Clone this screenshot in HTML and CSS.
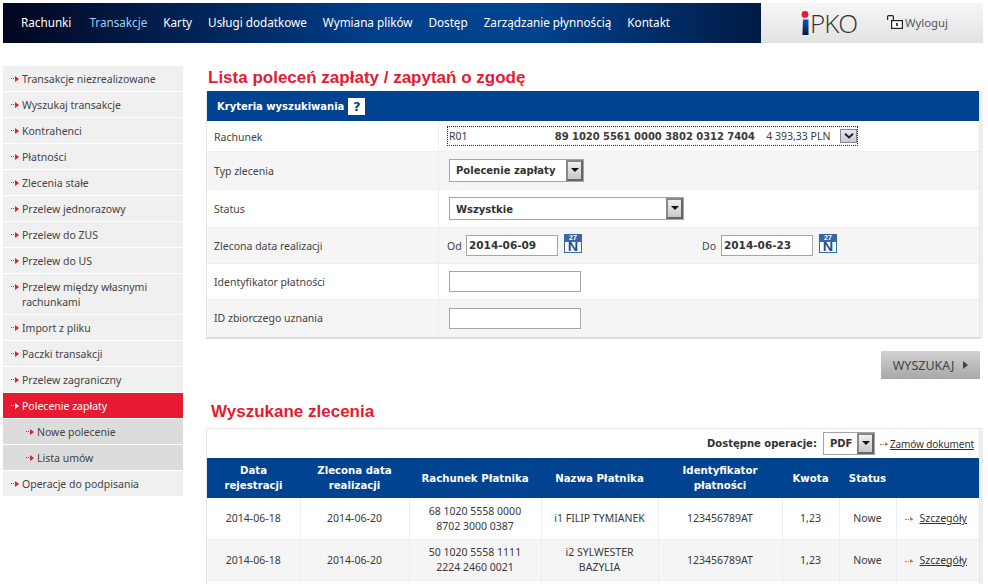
FILE: index.html
```html
<!DOCTYPE html>
<html lang="pl">
<head>
<meta charset="utf-8">
<title>iPKO</title>
<link rel="stylesheet" href="styles.css">
</head>
<body>
<div class="page">
  <header class="topbar">
    <nav class="topnav">
      <a>Rachunki</a><a class="active">Transakcje</a><a>Karty</a><a>Usługi dodatkowe</a><a>Wymiana plików</a><a>Dostęp</a><a>Zarządzanie płynnością</a><a>Kontakt</a>
    </nav>
    <div class="brand">
      <div class="logo">
        <svg class="logo-i" width="8" height="24" viewBox="0 0 8 24"><defs><linearGradient id="lg" x1="0" y1="0" x2="0" y2="1"><stop offset="0" stop-color="#0a58b0"/><stop offset="1" stop-color="#061a3c"/></linearGradient></defs><circle cx="4" cy="3.4" r="3.4" fill="#e8192f"/><path d="M2 8.5h5.5V24H1.4z" fill="url(#lg)"/></svg>
        <span class="logo-text">PKO</span>
      </div>
      <a class="logout">
        <svg width="16" height="14" viewBox="0 0 16 14" fill="none" stroke="#222" stroke-width="1.2"><path d="M.6 5V1.6Q.6.6 1.6.6h3.8q1 0 1 1V5"/><rect x="4.6" y="5.6" width="10.8" height="7.8" fill="#fff"/><path d="M10 8v3" stroke-width="1.6"/></svg>
        <span>Wyloguj</span>
      </a>
    </div>
  </header>

  <div class="layout">
    <aside class="sidebar">
      <a class="side-item">Transakcje niezrealizowane</a>
      <a class="side-item">Wyszukaj transakcje</a>
      <a class="side-item">Kontrahenci</a>
      <a class="side-item">Płatności</a>
      <a class="side-item">Zlecenia stałe</a>
      <a class="side-item">Przelew jednorazowy</a>
      <a class="side-item">Przelew do ZUS</a>
      <a class="side-item">Przelew do US</a>
      <a class="side-item tall">Przelew między własnymi rachunkami</a>
      <a class="side-item">Import z pliku</a>
      <a class="side-item">Paczki transakcji</a>
      <a class="side-item">Przelew zagraniczny</a>
      <a class="side-item current">Polecenie zapłaty</a>
      <a class="side-item sub">Nowe polecenie</a>
      <a class="side-item sub">Lista umów</a>
      <a class="side-item">Operacje do podpisania</a>
    </aside>

    <main class="content">
      <h1 class="title">Lista poleceń zapłaty / zapytań o zgodę</h1>
      <section class="panel criteria">
        <div class="panel-head">Kryteria wyszukiwania <span class="help">?</span></div>
        <div class="frow r1">
          <div class="flabel">Rachunek</div>
          <div class="fvalue">
            <div class="account">
              <span class="acc-name">R01</span>
              <b class="acc-no">89 1020 5561 0000 3802 0312 7404</b>
              <span class="acc-bal">4 393,33 PLN</span>
              <span class="acc-btn"><svg width="10" height="6" viewBox="0 0 10 6"><path d="M1 .8l4 3.6 4-3.6" fill="none" stroke="#222" stroke-width="2"/></svg></span>
            </div>
          </div>
        </div>
        <div class="frow r2 alt">
          <div class="flabel">Typ zlecenia</div>
          <div class="fvalue"><div class="select w-type"><b>Polecenie zapłaty</b><span class="sel-btn"></span></div></div>
        </div>
        <div class="frow r2">
          <div class="flabel">Status</div>
          <div class="fvalue"><div class="select w-status"><b>Wszystkie</b><span class="sel-btn"></span></div></div>
        </div>
        <div class="frow r3 alt">
          <div class="flabel">Zlecona data realizacji</div>
          <div class="fvalue dates">
            <div class="date-group">
              <span class="date-label">Od</span><span class="input date">2014-06-09</span>
              <span class="cal"><span class="cal-top">27</span><span class="cal-n">N</span></span>
            </div>
            <div class="date-group">
              <span class="date-label">Do</span><span class="input date">2014-06-23</span>
              <span class="cal"><span class="cal-top">27</span><span class="cal-n">N</span></span>
            </div>
          </div>
        </div>
        <div class="frow r3">
          <div class="flabel">Identyfikator płatności</div>
          <div class="fvalue"><span class="input text"></span></div>
        </div>
        <div class="frow r3 alt last">
          <div class="flabel">ID zbiorczego uznania</div>
          <div class="fvalue"><span class="input text"></span></div>
        </div>
      </section>
      <div class="actions">
        <a class="btn-search">WYSZUKAJ<svg width="5" height="8" viewBox="0 0 5 8"><path d="M0 0l5 4-5 4z" fill="#444"/></svg></a>
      </div>

      <h2 class="title second">Wyszukane zlecenia</h2>
      <section class="panel results">
        <div class="ops">
          <b>Dostępne operacje:</b>
          <div class="select w-pdf"><b>PDF</b><span class="sel-btn"></span></div>
          <span class="ops-arrow"></span><a class="link ops-link">Zamów dokument</a>
        </div>
        <table class="grid">
          <colgroup><col class="c1"><col class="c2"><col class="c3"><col class="c4"><col class="c5"><col class="c6"><col class="c7"><col class="c8"></colgroup>
          <thead>
            <tr><th>Data<br>rejestracji</th><th>Zlecona data<br>realizacji</th><th>Rachunek Płatnika</th><th>Nazwa Płatnika</th><th>Identyfikator<br>płatności</th><th>Kwota</th><th>Status</th><th></th></tr>
          </thead>
          <tbody>
            <tr><td>2014-06-18</td><td>2014-06-20</td><td>68 1020 5558 0000<br>8702 3000 0387</td><td>i1 FILIP TYMIANEK</td><td>123456789AT</td><td>1,23</td><td>Nowe</td><td class="more"><span class="more-arrow"></span><a class="link">Szczegóły</a></td></tr>
            <tr class="alt"><td>2014-06-18</td><td>2014-06-20</td><td>50 1020 5558 1111<br>2224 2460 0021</td><td>i2 SYLWESTER<br>BAZYLIA</td><td>123456789AT</td><td>1,23</td><td>Nowe</td><td class="more"><span class="more-arrow"></span><a class="link">Szczegóły</a></td></tr>
            <tr><td></td><td></td><td></td><td></td><td></td><td></td><td></td><td></td></tr>
          </tbody>
        </table>
      </section>
    </main>
  </div>
</div>
</body>
</html>
```
FILE: styles.css
```css
* { box-sizing: border-box; }
html, body { margin: 0; height: 100%; overflow: hidden; background: #fff; }
body { font-family: "Noto Sans", "DejaVu Sans", sans-serif; font-size: 10.5px; color: #3a3a3a; }
b { font-family: "DejaVu Sans", sans-serif; font-size: 10px; font-weight: 700; }
.page { width: 988px; height: 584px; padding: 3px 5px 0 3px; overflow: hidden; }

.topbar { display: flex; height: 40px; }
.topnav { width: 758px; display: flex; align-items: center; padding: 0 0 2px 18px; gap: 16px; background: linear-gradient(90deg, #020620 0%, #00408c 50%, #00438f 70%, #011a45 100%); font-size: 11.7px; color: #fff; }
.topnav .active { color: #9fd0f5; margin-left: 2px; }
.brand { flex: 1; display: flex; align-items: center; background: linear-gradient(#f6f6f6, #e2e2e2); padding-left: 40px; }
.logo { display: flex; align-items: flex-end; width: 86px; height: 24px; }
.logo-i { display: block; }
.logo-text { font-family: "Open Sans", sans-serif; font-weight: 300; font-size: 26px; line-height: 24px; color: #333; margin-left: 1px; letter-spacing: -1px; }
.logout { display: flex; align-items: center; gap: 2px; color: #555; font-size: 11.3px; margin-bottom: 2px; }

.layout { display: flex; margin-top: 23px; }
.sidebar { width: 180px; display: flex; flex-direction: column; gap: 1px; }
.side-item { display: flex; align-items: center; min-height: 25px; padding: 1px 0 0 19px; background: #f0f0f0; color: #444; position: relative; line-height: 15px; }
.side-item.tall { min-height: 40px; padding-right: 20px; }
.side-item.current { background: #e61a30; color: #fff; }
.side-item.sub { background: #dcdcdc; padding-left: 34px; }
.side-item::before { content: ""; position: absolute; left: 8px; top: 12px; width: 7px; border-top: 1px dotted #e61a30; }
.side-item::after { content: ""; position: absolute; left: 12px; top: 10px; border-left: 4px solid #e61a30; border-top: 3px solid transparent; border-bottom: 3px solid transparent; }
.side-item.current::before { border-top-color: #fff; }
.side-item.current::after { border-left-color: #fff; }
.side-item.sub::before { left: 23px; }
.side-item.sub::after { left: 27px; }

.content { width: 774px; margin-left: 23px; }
.title { margin: 0; height: 25px; padding: 1px 0 0 2px; font-family: "Liberation Sans", Arial, sans-serif; font-size: 17px; line-height: 21px; font-weight: 700; color: #e61a30; }
.second { padding-left: 5px; height: 27px; line-height: 22px; padding-top: 0; }

.panel { border: 1px solid #e6e6e6; border-width: 0 1px; box-shadow: 3px 0 0 #eee; }
.panel-head { display: flex; align-items: center; gap: 4px; height: 30px; background: #004391; color: #fff; padding-left: 10px; font-family: "DejaVu Sans", sans-serif; font-weight: 700; font-size: 10px; }
.help { width: 17px; height: 17px; background: #fff; color: #004391; text-align: center; font-size: 13px; line-height: 17px; }
.criteria { border-bottom: 2px solid #dedede; }
.frow { display: flex; border-bottom: 1px solid #eee; }
.frow.r1 { height: 31px; }
.frow.r1 .flabel { padding-top: 1px; }
.frow.r2 { height: 38px; }
.frow.r3 { height: 36px; }
.frow.alt { background: #f5f5f5; }
.frow.last { border-bottom: 0; height: 37px; padding-bottom: 1px; }
.flabel { width: 232px; padding-left: 7px; border-right: 1px solid #eee; display: flex; align-items: center; color: #444; }
.fvalue { flex: 1; display: flex; align-items: center; padding-left: 10px; }

.account { width: 411px; height: 20px; margin: 0 0 0 -2px; border: 1px dotted #222; display: flex; align-items: center; padding-left: 1px; white-space: nowrap; }
.acc-name { width: 106px; }
.acc-no { width: 212px; letter-spacing: -.05px; }
.acc-bal { width: 74px; }
.acc-btn { width: 17px; height: 14px; background: linear-gradient(#e4e6ee, #c9cbdb); border: 1px solid #888; display: flex; align-items: center; justify-content: center; }

.select { display: flex; align-items: center; justify-content: space-between; height: 23px; background: #fff; border: 1px solid #a5a5a5; }
.select b { padding-left: 6px; color: #333; }
.w-type { width: 135px; }
.w-status { width: 235px; }
.w-status b { padding-top: 1px; }
.w-pdf { width: 52px; margin: 0 5px 0 6px; }
.sel-btn { width: 17px; height: 21px; position: relative; background: linear-gradient(#f0f0f0, #c8c8c8); border: 2px solid #777; border-color: #888 #666 #666 #888; }
.sel-btn::after { content: ""; position: absolute; left: 3px; top: 6px; border-top: 4px solid #111; border-left: 4px solid transparent; border-right: 4px solid transparent; }

.dates { padding-left: 8px; }
.date-group { display: flex; align-items: center; width: 255px; }
.date-label { width: 19px; color: #444; }
.input { display: block; background: #fff; border: 1px solid #a5a5a5; height: 21px; }
.date { width: 92px; padding-left: 2px; line-height: 19px; font-family: "DejaVu Sans", sans-serif; font-weight: 700; font-size: 10.5px; color: #333; }
.text { width: 132px; }
.cal { width: 18px; height: 19px; margin: 0 0 5px 6px; background: #fff; border: 1px solid #3a66a5; border-width: 0 1px 1px 1px; display: block; text-align: center; font-family: "Liberation Sans", sans-serif; font-weight: 700; }
.cal-top { display: block; height: 8px; margin: 0 -1px; background: #3a66a5; color: #fff; font-size: 7px; line-height: 8px; }
.cal-n { display: block; font-size: 12px; line-height: 10px; color: #1b4f96; transform: scaleX(1.2); }

.actions { display: flex; justify-content: flex-end; margin-top: 12px; height: 28px; margin-bottom: 22px; }
.btn-search { width: 99px; height: 28px; display: flex; align-items: center; justify-content: center; gap: 9px; background: linear-gradient(#d2d2d2, #a8a8a8); color: #444; font-size: 12.5px; }

.results { border-top: 1px solid #e6e6e6; }
.ops { height: 29px; display: flex; align-items: center; justify-content: flex-end; padding-right: 5px; color: #333; }
.link { color: #333; text-decoration: underline; }
.ops-link { font-size: 10px; letter-spacing: -.1px; }
.ops-arrow, .more-arrow { display: inline-block; width: 8px; height: 3px; border-top: 1px dotted #d8702a; position: relative; margin-right: 2px; }
.ops-arrow { top: 2px; }
.more-arrow { margin-right: 7px; }
.ops-arrow::after, .more-arrow::after { content: ""; position: absolute; right: 0; top: -3px; border-left: 3px solid #d8702a; border-top: 2px solid transparent; border-bottom: 2px solid transparent; }
.grid { table-layout: fixed; width: 772px; border-collapse: collapse; }
.c1 { width: 93px; } .c2 { width: 109px; } .c3 { width: 132px; } .c4 { width: 117px; } .c5 { width: 124px; } .c6 { width: 57px; } .c7 { width: 57px; } .c8 { width: 83px; }
.grid th { height: 40px; padding: 0; background: #004391; color: #fff; font-family: "DejaVu Sans", sans-serif; font-size: 10.2px; font-weight: 700; line-height: 15px; text-align: center; }
.grid td { height: 41px; padding: 1px 0 0; border-right: 1px solid #eee; border-bottom: 1px solid #eee; text-align: center; line-height: 15px; color: #3a3a3a; }
.grid td:last-child { border-right: 0; }
.grid tr.alt td { background: #f5f5f5; }
.grid td.more { white-space: nowrap; padding-right: 4px; }
```
